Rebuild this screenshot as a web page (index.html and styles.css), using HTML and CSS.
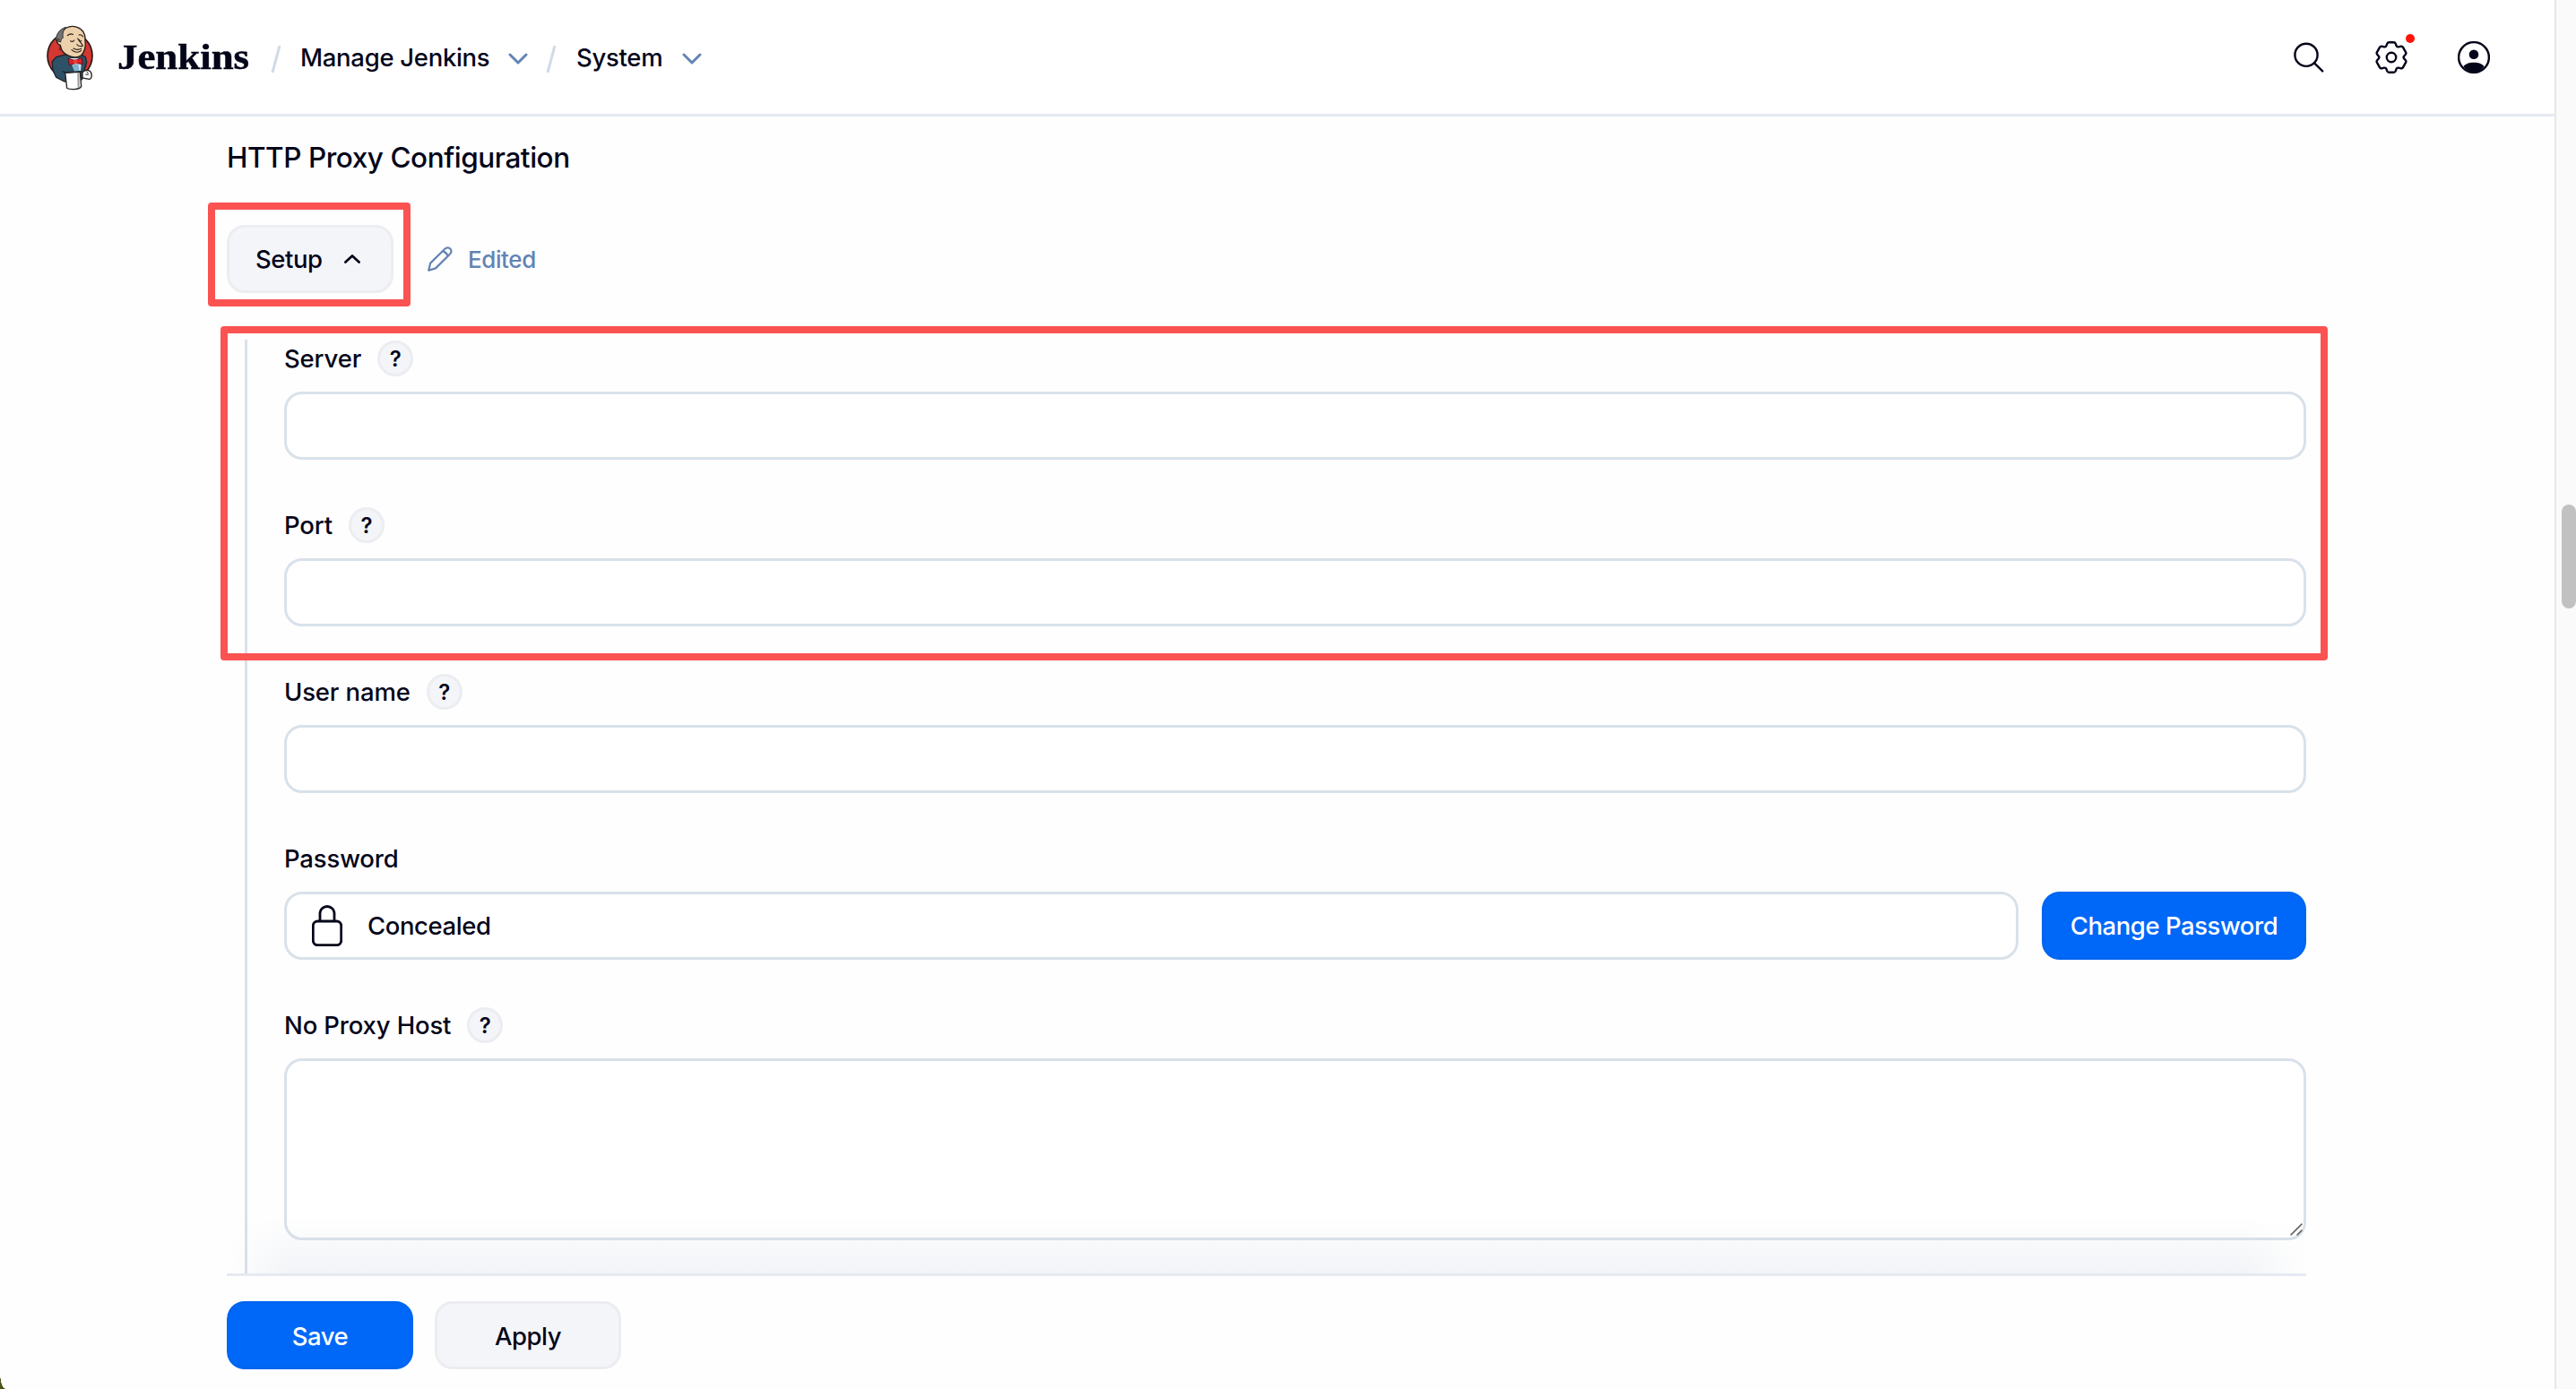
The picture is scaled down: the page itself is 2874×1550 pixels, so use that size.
FILE: index.html
```html
<!DOCTYPE html>
<html lang="en">
<head>
  <meta charset="UTF-8" />
  <meta name="viewport" content="width=device-width, initial-scale=1.0"/>
  <title>System - Jenkins</title>
  <link rel="stylesheet" href="styles.css">
</head>
<body>
  <div class="page">
    <header class="header">
      <a class="brand" href="#">
        <svg class="logo" viewBox="60 50 165 222">
          <ellipse cx="144" cy="156" rx="75" ry="77" fill="#d33833" stroke="#2b1a1a" stroke-width="5"/>
          <!-- jacket -->
          <path d="M98 160 L84 176 L88 206 L98 228 L126 242 L184 236 L192 206 L200 178 L196 160 L182 152 L128 152 Z" fill="#2d5166" stroke="#1d252c" stroke-width="4"/>
          <path d="M142 164 L160 208 L180 206 L184 164 Z" fill="#d5e5ee"/>
          <path d="M152 184 L160 208 L176 206 L172 184 Z" fill="#7fb0cf"/>
          <!-- head -->
          <path d="M121 72 C130 58 150 54 168 60 C187 66 197 84 195 104 C198 126 192 144 182 154 C170 164 150 162 136 154 C124 148 114 136 112 120 C102 118 98 108 102 98 C102 88 110 78 121 72 Z" fill="#ecd1ac" stroke="#2b1d16" stroke-width="4"/>
          <path d="M98 105 C97 84 108 68 130 60 C122 70 118 82 121 96 C116 96 114 102 113 110 Z" fill="#747477" stroke="#30302f" stroke-width="3"/>
          <path d="M102 112 C96 102 106 96 110 104 M111 124 L111 138" fill="none" stroke="#2b1d16" stroke-width="3"/>
          <path d="M136 88 C142 82 148 82 154 84 M174 86 C180 84 184 86 188 92 M146 106 C150 110 156 108 158 104 M176 102 C172 106 180 108 182 106 M170 98 C178 112 192 122 184 124 C178 124 170 124 168 118 M150 136 C160 146 174 146 182 138 M156 131 C164 136 174 136 182 132" fill="none" stroke="#2b1d16" stroke-width="3.5" stroke-linecap="round"/>
          <path d="M138 164 L160 172 L184 162 L187 184 L163 180 L142 187 Z" fill="#d9232b" stroke="#5c1414" stroke-width="3"/>
          <rect x="157" y="168" width="12" height="15" rx="3" fill="#ef3d3a"/>
          <!-- mug and hand -->
          <path d="M128 212 L178 210 L182 258 C176 270 142 270 134 264 Z" fill="#fff" stroke="#24201f" stroke-width="4"/>
          <path d="M172 214 L173 262" stroke="#999" stroke-width="6"/>
          <path d="M186 212 C192 202 208 202 214 210 C220 222 216 234 208 234 L186 230 Z" fill="#fff" stroke="#24201f" stroke-width="4"/>
          <path d="M196 218 L206 219 M200 208 L206 216" stroke="#24201f" stroke-width="3"/>
          <path d="M118 208 L132 212 L186 208" fill="none" stroke="#1d252c" stroke-width="4"/>
        </svg>
        <span class="brand-name">Jenkins</span>
      </a>
      <nav class="breadcrumbs">
        <svg class="slash" viewBox="0 0 12 30"><path d="M2 30 L10 0"/></svg>
        <a class="crumb crumb-manage" href="#">Manage Jenkins</a>
        <svg class="crumb-chevron" viewBox="0 0 22 14"><path d="M2 2 L11 11 L20 2"/></svg>
        <svg class="slash" viewBox="0 0 12 30"><path d="M2 30 L10 0"/></svg>
        <a class="crumb crumb-system" href="#">System</a>
        <svg class="crumb-chevron" viewBox="0 0 22 14"><path d="M2 2 L11 11 L20 2"/></svg>
      </nav>
      <div class="actions">
        <svg class="action-icon" viewBox="0 0 36 36"><circle cx="15" cy="15.3" r="12.6"/><path d="M24.3 24.6 L33.2 33.4"/></svg>
        <span class="action-settings">
          <svg class="action-icon" viewBox="-18 -18 36 36">
            <path d="M-2.6 -16.8 H2.6 Q4.1 -16.8 4.7 -15.4 L5.6 -12.9 Q6.2 -11.3 8 -11.7 L10.8 -12.3 Q12.2 -12.5 12.9 -11.3 L16.1 -5.7 Q16.8 -4.4 15.8 -3.2 L14.1 -1.2 Q13.1 0 14.1 1.2 L15.8 3.2 Q16.8 4.4 16.1 5.7 L12.9 11.3 Q12.2 12.5 10.8 12.3 L8 11.7 Q6.2 11.3 5.6 12.9 L4.7 15.4 Q4.1 16.8 2.6 16.8 H-2.6 Q-4.1 16.8 -4.7 15.4 L-5.6 12.9 Q-6.2 11.3 -8 11.7 L-10.8 12.3 Q-12.2 12.5 -12.9 11.3 L-16.1 5.7 Q-16.8 4.4 -15.8 3.2 L-14.1 1.2 Q-13.1 0 -14.1 -1.2 L-15.8 -3.2 Q-16.8 -4.4 -16.1 -5.7 L-12.9 -11.3 Q-12.2 -12.5 -10.8 -12.3 L-8 -11.7 Q-6.2 -11.3 -5.6 -12.9 L-4.7 -15.4 Q-4.1 -16.8 -2.6 -16.8 Z"/>
            <circle cx="0" cy="0" r="5.2"/>
          </svg>
          <span class="badge"></span>
        </span>
        <svg class="action-icon" viewBox="0 0 36 36">
          <circle cx="18" cy="18" r="16.9"/>
          <circle class="solid" cx="18" cy="14.8" r="5.3"/>
          <path class="solid" d="M6.4 28.2 C8.6 25.2 13 23.8 18 23.8 C23 23.8 27.4 25.2 29.6 28.2 C26.4 32.4 22.4 34.4 18 34.4 C13.6 34.4 9.6 32.4 6.4 28.2 Z"/>
        </svg>
      </div>
    </header>

    <main class="content">
      <h2 class="section-title">HTTP Proxy Configuration</h2>

      <div class="setup-row">
        <button class="btn btn-setup">Setup
          <svg class="setup-chevron" viewBox="0 0 18 10"><path d="M1.4 8.6 L9 1.4 L16.6 8.6"/></svg>
        </button>
        <svg class="pencil" viewBox="0 0 28 28"><path d="M1.2 26.8 L3.2 18.6 L19.6 2.5 C21.2 .9 23.8 .9 25.3 2.5 C26.9 4.1 26.9 6.6 25.3 8.2 L9 24.4 Z M17.6 5.6 Q21.2 6.8 22.4 10.4"/></svg>
        <span class="edited">Edited</span>
        <div class="highlight highlight-setup"></div>
      </div>

      <div class="nested">
        <div class="highlight highlight-fields"></div>
        <div class="form-item">
          <label class="form-label">Server <span class="help">?</span></label>
          <input class="input" type="text">
        </div>
        <div class="form-item">
          <label class="form-label">Port <span class="help">?</span></label>
          <input class="input" type="text">
        </div>
        <div class="form-item">
          <label class="form-label">User name <span class="help">?</span></label>
          <input class="input" type="text">
        </div>
        <div class="form-item">
          <label class="form-label">Password</label>
          <div class="password-row">
            <div class="input concealed">
              <svg class="lock" viewBox="0 0 34 46"><rect x="1.3" y="18" width="31.4" height="26.6" rx="5"/><path d="M9 18 V9.5 A8 8 0 0 1 25 9.5 V18"/></svg>
              <span>Concealed</span>
            </div>
            <button class="btn btn-primary btn-change">Change Password</button>
          </div>
        </div>
        <div class="form-item">
          <label class="form-label">No Proxy Host <span class="help">?</span></label>
          <div class="textarea-wrap">
            <textarea class="input textarea"></textarea>
            <svg class="grip" viewBox="0 0 14 14"><path d="M.6 13.4 L13.4 .6 M7.6 13.4 L13.4 7.6"/></svg>
          </div>
        </div>
      </div>
    </main>

    <footer class="bottom-bar">
      <button class="btn btn-primary btn-wide">Save</button>
      <button class="btn btn-wide">Apply</button>
    </footer>
  </div>

  <div class="scrollbar"><div class="thumb"></div></div>
  <div class="corner"></div>
</body>
</html>
```
FILE: styles.css
```css
* {
  box-sizing: border-box;
}
body {
  margin: 0;
  width: 2874px;
  height: 1550px;
  overflow: hidden;
  display: flex;
  background: #fefefe;
  color: #05051a;
  font-family: Inter, "Liberation Sans", sans-serif;
  font-size: 27.5px;
  font-weight: 450;
  letter-spacing: -0.3px;
}
a {
  color: inherit;
  text-decoration: none;
}
svg {
  display: block;
  flex: none;
  fill: none;
  stroke: currentColor;
}
.page {
  width: 2850px;
  display: flex;
  flex-direction: column;
}

/* header */
.header {
  height: 130px;
  flex: none;
  display: flex;
  align-items: center;
  padding: 0 72px 0 50px;
  background: #fff;
  border-bottom: 3px solid #e5eaf2;
}
.brand {
  display: flex;
  align-items: center;
  width: 252px;
}
.logo {
  width: 55px;
  height: 74px;
  margin-right: 26px;
  stroke: none;
}
.brand-name {
  font-family: "Liberation Serif", serif;
  font-size: 39px;
  font-weight: bold;
  line-height: 44px;
  letter-spacing: 0;
  transform: scaleX(1.15);
  transform-origin: left;
  -webkit-text-stroke: 0.5px #05051a;
}
.breadcrumbs {
  display: flex;
  align-items: center;
  padding-top: 4px;
}
.slash {
  width: 12px;
  height: 30px;
  color: #d0dbe8;
  stroke-width: 3;
}
.crumb {
  padding-bottom: 3px;
  white-space: nowrap;
}
.crumb-manage {
  width: 232px;
  margin-left: 21px;
}
.crumb-system {
  width: 118px;
  margin-left: 22px;
}
.crumb-chevron {
  width: 22px;
  height: 14px;
  margin-right: 20px;
  color: #6384b4;
  stroke-width: 3;
  stroke-linecap: round;
  stroke-linejoin: round;
}
.actions {
  display: flex;
  gap: 56px;
  margin-left: auto;
}
.action-icon {
  width: 36px;
  height: 36px;
  stroke-width: 2.4;
  stroke-linecap: round;
}
.action-icon .solid {
  fill: currentColor;
  stroke: none;
}
.action-settings {
  position: relative;
}
.badge {
  position: absolute;
  top: -8px;
  right: -8px;
  width: 10px;
  height: 10px;
  border-radius: 50%;
  background: #ff1209;
}

/* form */
.content {
  height: 1291px;
  flex: none;
  overflow: hidden;
  padding: 26px 277px 0 253px;
}
.section-title {
  margin: 0 0 55px;
  font-size: 31.5px;
  font-weight: 450;
  line-height: 40px;
  letter-spacing: -0.45px;
}
.setup-row {
  position: relative;
  display: flex;
  align-items: center;
  height: 76px;
}
.btn {
  height: 76px;
  padding: 0 30px;
  display: flex;
  align-items: center;
  justify-content: center;
  border: 3px solid #ecedf1;
  border-radius: 20px;
  background: #f4f5f9;
  color: inherit;
  font: inherit;
  letter-spacing: -0.45px;
  white-space: nowrap;
}
.btn-setup {
  width: 186px;
  justify-content: space-between;
  padding: 0 34px 0 29px;
}
.setup-chevron {
  width: 18px;
  height: 10px;
  stroke-width: 2.7;
  stroke-linecap: round;
  stroke-linejoin: round;
}
.btn-primary {
  background: #0068f8;
  border-color: #0065f1;
  color: #fff;
}
.btn-wide {
  width: 208px;
  padding-top: 1px;
}
.btn-change {
  width: 295px;
}
.pencil {
  width: 28px;
  height: 28px;
  margin: 0 17px 0 38px;
  color: #6384b4;
  stroke-width: 2.2;
  stroke-linejoin: round;
}
.edited {
  color: #6384b4;
  font-size: 26px;
  letter-spacing: -0.4px;
}
.highlight {
  position: absolute;
  border: 8px solid #fb5252;
  border-radius: 4px;
  pointer-events: none;
}
.highlight-setup {
  left: -21px;
  top: -25px;
  width: 226px;
  height: 116px;
}
.highlight-fields {
  left: -30px;
  top: -15px;
  width: 2351px;
  height: 373px;
}
.nested {
  position: relative;
  margin: 52px 0 0 20px;
  padding: 1px 0 60px 41px;
  border-left: 3px solid #d9e1ea;
}
.form-item {
  margin-bottom: 53px;
}
.form-label {
  display: flex;
  align-items: center;
  gap: 18px;
  height: 40px;
  margin-bottom: 17px;
  letter-spacing: -0.15px;
}
.help {
  width: 40px;
  height: 40px;
  border: 3px solid #ecedf1;
  border-radius: 50%;
  background: #f4f5f9;
  font-size: 24px;
  font-weight: 600;
  line-height: 35px;
  text-align: center;
}
.input {
  display: block;
  width: 100%;
  height: 76px;
  border: 3px solid #d9e1ea;
  border-radius: 20px;
  background: #fff;
}
.password-row {
  display: flex;
  gap: 26px;
}
.password-row .concealed {
  flex: 1;
  display: flex;
  align-items: center;
  gap: 28px;
  padding-left: 28px;
  letter-spacing: -0.4px;
}
.lock {
  width: 34px;
  height: 46px;
  stroke-width: 2.8;
}
.textarea-wrap {
  position: relative;
}
.textarea {
  height: 203px;
  resize: none;
}
.grip {
  position: absolute;
  right: 4px;
  bottom: 5px;
  width: 14px;
  height: 14px;
  color: #666;
  stroke-width: 1.6;
}

/* sticky buttons */
.bottom-bar {
  position: relative;
  display: flex;
  gap: 24px;
  height: 129px;
  margin: 0 277px 0 253px;
  padding-top: 28px;
  border-top: 3px solid #e5eaf2;
}
.bottom-bar::before {
  content: "";
  position: absolute;
  left: 0;
  right: 0;
  bottom: 100%;
  height: 64px;
  margin-bottom: 3px;
  background: linear-gradient(rgba(200, 210, 225, 0), rgba(200, 210, 225, 0.22));
  -webkit-mask-image: linear-gradient(to right, transparent, #000 70px, #000 calc(100% - 70px), transparent);
  mask-image: linear-gradient(to right, transparent, #000 70px, #000 calc(100% - 70px), transparent);
}

.scrollbar {
  width: 24px;
  padding: 563px 0 0 6px;
  border-left: 2px solid #e7e7e7;
  background: #fafafa;
}
.thumb {
  width: 16px;
  height: 116px;
  border-radius: 8px;
  background: #c1c1c1;
}
/* desktop showing behind the rounded window corner */
.corner {
  position: absolute;
  left: 0;
  bottom: 0;
  width: 6px;
  height: 18px;
  background: radial-gradient(ellipse 6px 18px at 100% 0, transparent 96%, #4a5416 100%);
}
```
